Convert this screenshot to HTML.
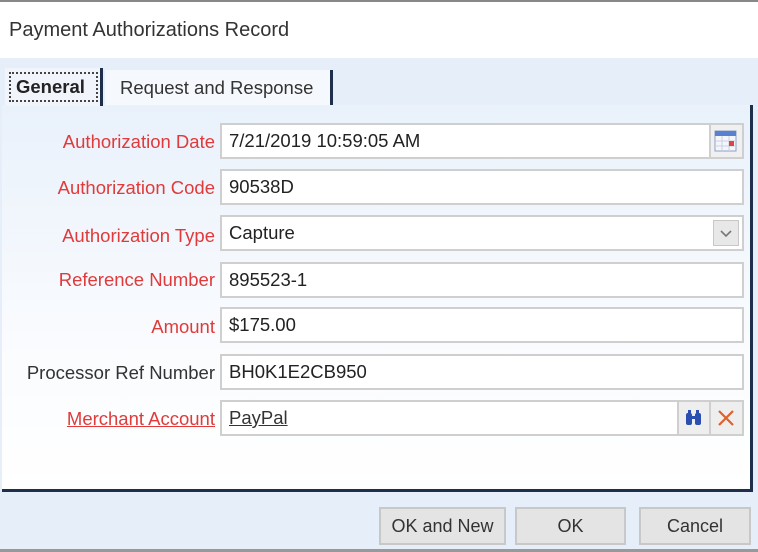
<!DOCTYPE html>
<html><head><meta charset="utf-8"><style>
*{box-sizing:border-box;margin:0;padding:0}
body{width:758px;height:552px;overflow:hidden;background:#e6eef9;font-family:"Liberation Sans",sans-serif;font-size:18.5px;color:#222;position:relative}
.title{position:absolute;left:0;top:0;width:758px;height:58px;background:#fff;border-top:2px solid #888}
.title span{position:absolute;left:9px;top:17px;font-size:20px;color:#333}
.tab{position:absolute;top:68px;height:38px;font-size:18.5px}
.panel{position:absolute;left:2px;top:105px;width:751px;height:387px;background:linear-gradient(#e9f1fb,#f9fbfe 60%,#fff);border-right:3px solid #1d2f4a;border-bottom:3px solid #1d2f4a}
.lbl{position:absolute;right:543px;color:#e03a3a;font-size:18.5px;white-space:nowrap}
.inp{position:absolute;left:220px;width:524px;height:36px;background:#fff;border:2px solid #cfcfcf;padding-left:7px;line-height:32px;font-size:18.5px;color:#222}
.btn{position:absolute;top:507px;height:38px;background:#e4e4e4;border:2px solid #c8c8c8;text-align:center;line-height:34px;font-size:18px;color:#333}
.side{position:absolute;top:0;bottom:0;width:33px;border-left:2px solid #cfcfcf;background:#eee}
</style></head><body>
<div class="title"><span>Payment Authorizations Record</span></div>
<div class="panel"></div>
<div class="tab" style="left:5px;width:98px;background:#f1f5fb;border-right:3px solid #1d2f4a"><div style="position:absolute;left:4px;top:4px;width:89px;height:30px;border:2px dotted #444;font-weight:bold;font-size:18.5px;line-height:26px;padding-left:5px">General</div></div>
<div class="tab" style="left:105px;width:228px;top:70px;height:35px;background:#f5f8fc;border-right:3px solid #1d2f4a;line-height:36px;padding-left:15px;color:#333">Request and Response</div>

<div class="lbl" style="top:131px">Authorization Date</div>
<div class="inp" style="top:123px">7/21/2019 10:59:05 AM<div class="side" style="right:0;background:#f0f0f0"><svg width="29" height="32" viewBox="0 0 29 32"><rect x="4" y="6" width="21" height="20" fill="#f4f6fb" stroke="#8aa0c8"/><rect x="4" y="6" width="21" height="5" fill="#5a80d0"/><path d="M4 16h21M4 21h21M11 11v15M18 11v15" stroke="#c8d0e0"/><rect x="18" y="16" width="5" height="5" fill="#d44"/></svg></div></div>

<div class="lbl" style="top:177px">Authorization Code</div>
<div class="inp" style="top:169px">90538D</div>

<div class="lbl" style="top:225px">Authorization Type</div>
<div class="inp" style="top:215px">Capture<div style="position:absolute;right:3px;top:3px;width:26px;height:26px;background:#e8e8e8;border:1px solid #c8c8c8"><svg width="24" height="24"><path d="M7 10l5 5 5-5" stroke="#777" stroke-width="1.6" fill="none"/></svg></div></div>

<div class="lbl" style="top:269px">Reference Number</div>
<div class="inp" style="top:262px">895523-1</div>

<div class="lbl" style="top:316px">Amount</div>
<div class="inp" style="top:307px">$175.00</div>

<div class="lbl" style="top:362px;color:#333">Processor Ref Number</div>
<div class="inp" style="top:354px">BH0K1E2CB950</div>

<div class="lbl" style="top:408px;text-decoration:underline">Merchant Account</div>
<div class="inp" style="top:400px;height:36px"><span style="text-decoration:underline;color:#333">PayPal</span>
<div class="side" style="right:33px;width:32px"><svg width="30" height="32"><g fill="#2a4fb0"><rect x="7" y="11" width="6" height="12" rx="2"/><rect x="16" y="11" width="6" height="12" rx="2"/><rect x="9" y="8" width="3" height="5"/><rect x="17" y="8" width="3" height="5"/><rect x="12" y="14" width="5" height="3"/></g></svg></div>
<div class="side" style="right:0;width:33px"><svg width="31" height="32"><path d="M8 9l14 14M22 9L8 23" stroke="#e0602a" stroke-width="2.2"/></svg></div></div>

<div class="btn" style="left:379px;width:127px">OK and New</div>
<div class="btn" style="left:515px;width:111px">OK</div>
<div class="btn" style="left:639px;width:112px">Cancel</div>
<div style="position:absolute;left:0;top:549px;width:758px;height:3px;background:#999"></div>
</body></html>
